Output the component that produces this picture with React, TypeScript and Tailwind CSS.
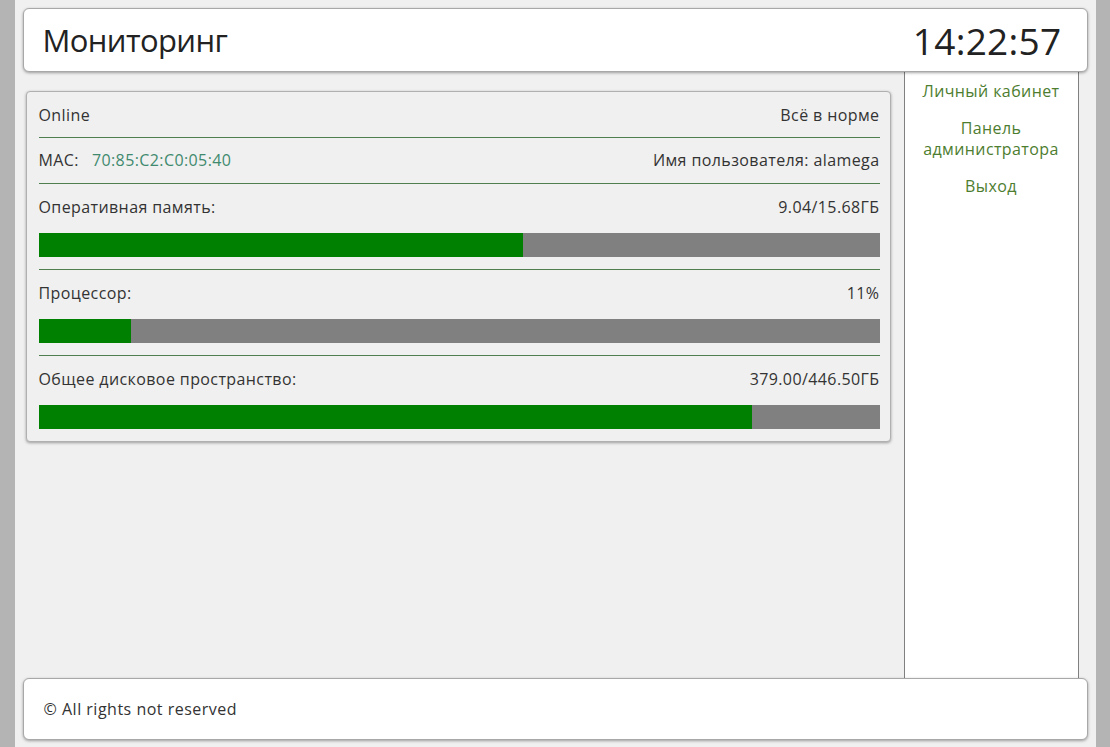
const rows = [
  { label: "Оперативная память:", value: "9.04/15.68ГБ", pct: 57.65 },
  { label: "Процессор:", value: "11%", pct: 11 },
  { label: "Общее дисковое пространство:", value: "379.00/446.50ГБ", pct: 84.88 },
];

const links = ["Личный кабинет", "Панель администратора", "Выход"];

function Bar({ pct }: { pct: number }) {
  return (
    <div className="mt-[14px] h-6 w-full bg-[#808080]">
      <div className="h-full bg-[#008000]" style={{ width: `${pct}%` }} />
    </div>
  );
}

export default function App() {
  return (
    <div className="flex h-[747px] justify-center bg-[#b4b4b4] font-['Open_Sans',sans-serif] text-[#333]">
      {/* Page column */}
      <div className="flex w-[1081px] flex-col bg-[#f0f0f0] px-2 pt-2 pb-[7px]">
        {/* Header */}
        <header className="relative z-10 flex h-16 items-center justify-between rounded-md border border-[#a8a8a8] bg-white pr-[25px] pl-[19px] shadow-[0_1px_3px_rgba(0,0,0,0.35)]">
          <h1 className="text-[31px] leading-none tracking-[-0.6px] text-[#222]">Мониторинг</h1>
          <div className="text-[37px] leading-none tracking-[0.3px] text-[#222]">14:22:57</div>
        </header>

        <div className="flex flex-1">
          {/* Main */}
          <main className="flex-1 pt-[19px] pl-[3px]">
            <section className="w-[865px] rounded-[4px] border border-[#b0b0b0] bg-[#f0f0f0] pr-[10px] pl-[12px] text-[16px] tracking-[0.4px] shadow-[0_1px_3px_rgba(0,0,0,0.35)]">
              <div className="flex justify-between pt-[11px] pb-[10px] leading-6">
                <span>Online</span>
                <span>Всё в норме</span>
              </div>
              <hr className="border-[#4f7f4f]" />
              <div className="flex justify-between pt-[10px] pb-[11px] leading-6">
                <span>
                  MAC:<span className="ml-[13px] text-[#3f8a6e]">70:85:C2:C0:05:40</span>
                </span>
                <span>Имя пользователя: alamega</span>
              </div>
              {rows.map((r) => (
                <div key={r.label}>
                  <hr className="border-[#4f7f4f]" />
                  <div className="pt-[11px] pb-[12px]">
                    <div className="flex justify-between leading-6">
                      <span>{r.label}</span>
                      <span>{r.value}</span>
                    </div>
                    <Bar pct={r.pct} />
                  </div>
                </div>
              ))}
            </section>
          </main>

          {/* Sidebar */}
          <aside className="-mt-2 mr-[9px] flex w-[175px] flex-col items-center gap-4 border-x border-[#808080] bg-white pt-[17px] text-center text-[16px] leading-[21px] tracking-[0.4px] text-[#4d7d2f]">
            {links.map((l) => (
              <a key={l} href="#" className="block px-3">
                {l}
              </a>
            ))}
          </aside>
        </div>

        {/* Footer */}
        <footer className="flex h-[62px] items-center rounded-md border border-[#a8a8a8] bg-white pl-5 text-[16px] tracking-[0.5px] shadow-[0_1px_3px_rgba(0,0,0,0.35)]">
          © All rights not reserved
        </footer>
      </div>
    </div>
  );
}
